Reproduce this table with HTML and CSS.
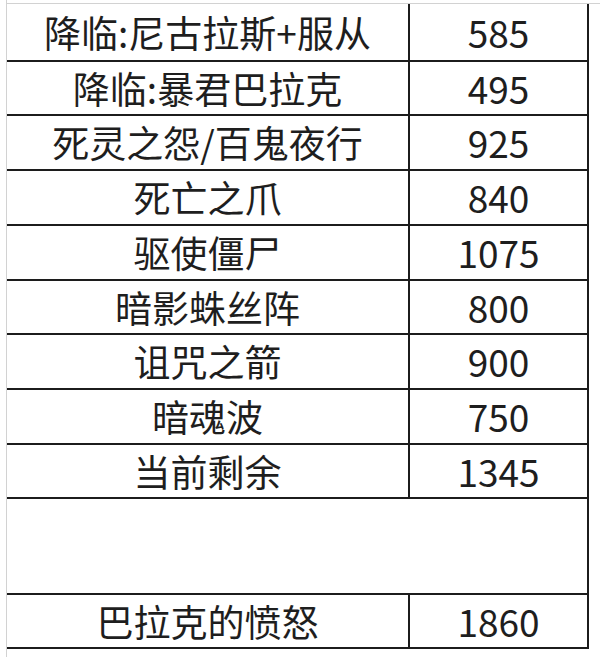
FILE: index.html
```html
<!DOCTYPE html>
<html lang="zh-CN">
<head>
<meta charset="utf-8">
<title>表格</title>
<link rel="stylesheet" href="styles.css">
</head>
<body>
<div class="page">
  <div class="topline"></div>
  <div class="grid">
    <div class="cell">降临:尼古拉斯+服从</div>
    <div class="cell">585</div>
    <div class="cell">降临:暴君巴拉克</div>
    <div class="cell">495</div>
    <div class="cell">死灵之怨/百鬼夜行</div>
    <div class="cell">925</div>
    <div class="cell">死亡之爪</div>
    <div class="cell">840</div>
    <div class="cell">驱使僵尸</div>
    <div class="cell">1075</div>
    <div class="cell">暗影蛛丝阵</div>
    <div class="cell">800</div>
    <div class="cell">诅咒之箭</div>
    <div class="cell">900</div>
    <div class="cell">暗魂波</div>
    <div class="cell">750</div>
    <div class="cell">当前剩余</div>
    <div class="cell">1345</div>
    <div class="cell merged"></div>
    <div class="cell">巴拉克的愤怒</div>
    <div class="cell">1860</div>
  </div>
</div>
</body>
</html>
```
FILE: styles.css
```css
html, body {
  margin: 0;
  padding: 0;
  background: #ffffff;
}
.page {
  margin-left: 6px;
  border-left: 1px solid #d2d2d2;
  height: 657px;
  overflow: hidden;
}
.topline {
  height: 3px;
  border-bottom: 1px solid #d2d2d2;
}
.grid {
  display: grid;
  width: max-content;
  grid-template-columns: 401px 177px;
  grid-template-rows: 56px 52px 53px 53px 53px 52px 53px 53px 52px 94px 52px;
  gap: 2px;
  padding: 0 2px 2px 0;
  background: #1c1c1c;
}
.cell {
  background: #ffffff;
  display: flex;
  align-items: center;
  justify-content: center;
  font-family: "Noto Sans CJK SC", "Noto Sans", sans-serif;
  font-size: 37px;
  line-height: 1;
  color: #1e1e1e;
  white-space: nowrap;
}
.merged {
  grid-column: 1 / 3;
}
```
